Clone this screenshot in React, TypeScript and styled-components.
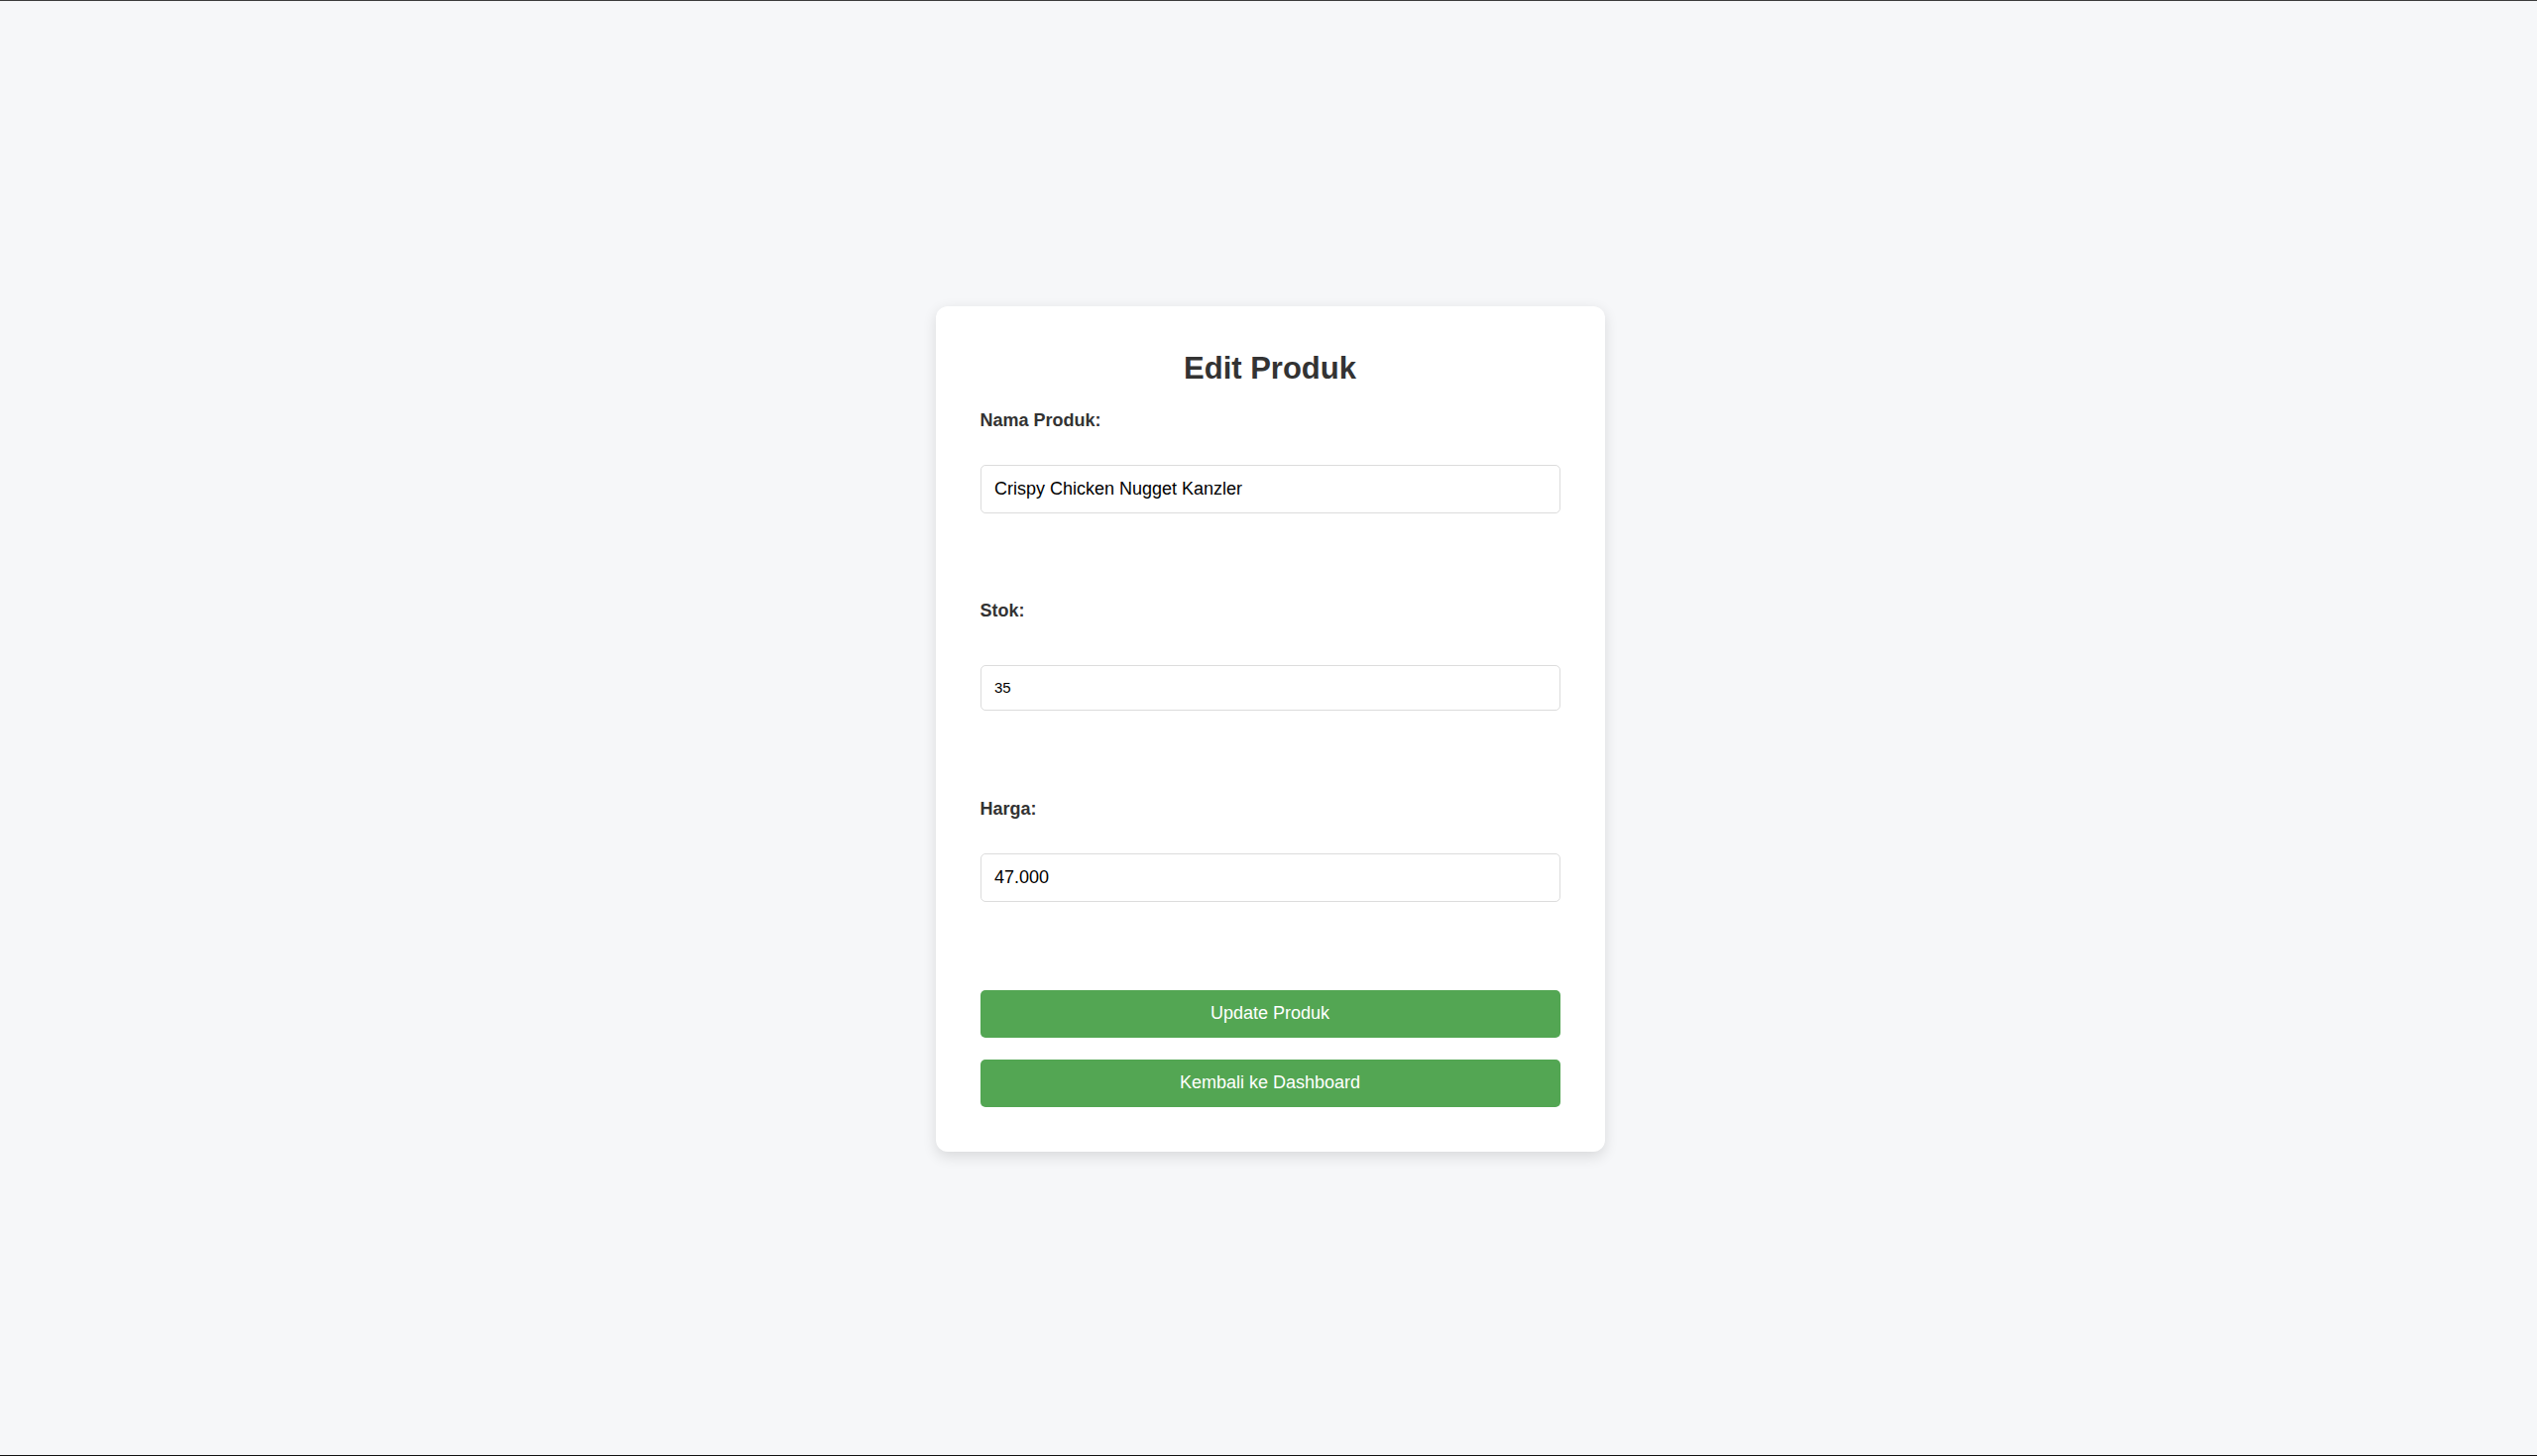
import React from "react"
import styled, { createGlobalStyle } from "styled-components"

const GlobalStyle = createGlobalStyle`
  html,
  body {
    margin: 0;
    padding: 0;
  }

  body {
    background: #f6f7f9;
    font-family: "Liberation Sans", Arial, sans-serif;
  }
`

const fields = [
  { id: "nama", label: "Nama Produk:", value: "Crispy Chicken Nugget Kanzler", type: "text", labelGap: 0, inputGap: 33.5 },
  { id: "stok", label: "Stok:", value: "35", type: "number", labelGap: 88, inputGap: 43.7 },
  { id: "harga", label: "Harga:", value: "47.000", type: "text", labelGap: 89, inputGap: 33.7 },
]

const App = () => {
  return (
    <>
      <GlobalStyle />
      <PageStyled>
        <CardStyled>
          <TitleStyled>Edit Produk</TitleStyled>
          <FormStyled onSubmit={e => e.preventDefault()}>
            {fields.map(item => (
              <React.Fragment key={item.id}>
                <LabelStyled htmlFor={item.id} $gap={item.labelGap}>
                  {item.label}
                </LabelStyled>
                <InputStyled
                  id={item.id}
                  type={item.type}
                  defaultValue={item.value}
                  $gap={item.inputGap}
                  $small={item.type === "number"}
                />
              </React.Fragment>
            ))}
            <ButtonStyled type="submit" $gap={89}>
              Update Produk
            </ButtonStyled>
            <ButtonStyled type="button" $gap={22.3}>
              Kembali ke Dashboard
            </ButtonStyled>
          </FormStyled>
        </CardStyled>
      </PageStyled>
    </>
  )
}

const PageStyled = styled.div`
  min-height: 100vh;
  box-sizing: border-box;
  padding: 2px 0 0 3px;
  border-top: 1px solid #3c3c3c;
  border-bottom: 1px solid #111;
  display: flex;
  align-items: center;
  justify-content: center;
`

const CardStyled = styled.div`
  width: 675px;
  box-sizing: border-box;
  padding: 45px;
  background: #fff;
  border-radius: 12px;
  box-shadow: 0 4.5px 14px rgba(0, 0, 0, 0.12);
`

const TitleStyled = styled.h2`
  margin: 0 0 24px;
  font-size: 31px;
  line-height: 36px;
  font-weight: 700;
  color: #333;
  text-align: center;
`

const FormStyled = styled.form`
  display: flex;
  flex-direction: column;
`

type Gap = {
  $gap: number
}

const LabelStyled = styled.label<Gap>`
  display: block;
  margin-top: ${props => props.$gap}px;
  font-size: 18px;
  line-height: 21px;
  font-weight: 700;
  color: #333;
`

type Input = Gap & {
  $small: boolean
}

const InputStyled = styled.input<Input>`
  display: block;
  width: 100%;
  box-sizing: border-box;
  margin: ${props => props.$gap}px 0 0;
  padding: 0 13.5px;
  height: ${props => (props.$small ? 46 : 49.5)}px;
  border: 1px solid #dcdcdc;
  border-radius: 5px;
  background: #fff;
  font-family: "Liberation Sans", Arial, sans-serif;
  font-size: ${props => (props.$small ? 15 : 18)}px;
  font-weight: 400;
  color: #000;
  outline: none;
  appearance: textfield;

  &::-webkit-outer-spin-button,
  &::-webkit-inner-spin-button {
    -webkit-appearance: none;
    margin: 0;
  }
`

const ButtonStyled = styled.button<Gap>`
  display: block;
  width: 100%;
  height: 47.7px;
  margin-top: ${props => props.$gap}px;
  padding: 0;
  border: none;
  border-radius: 5px;
  background: #53a653;
  color: #fff;
  font-family: "Liberation Sans", Arial, sans-serif;
  font-size: 18px;
  cursor: pointer;
`

export default App
